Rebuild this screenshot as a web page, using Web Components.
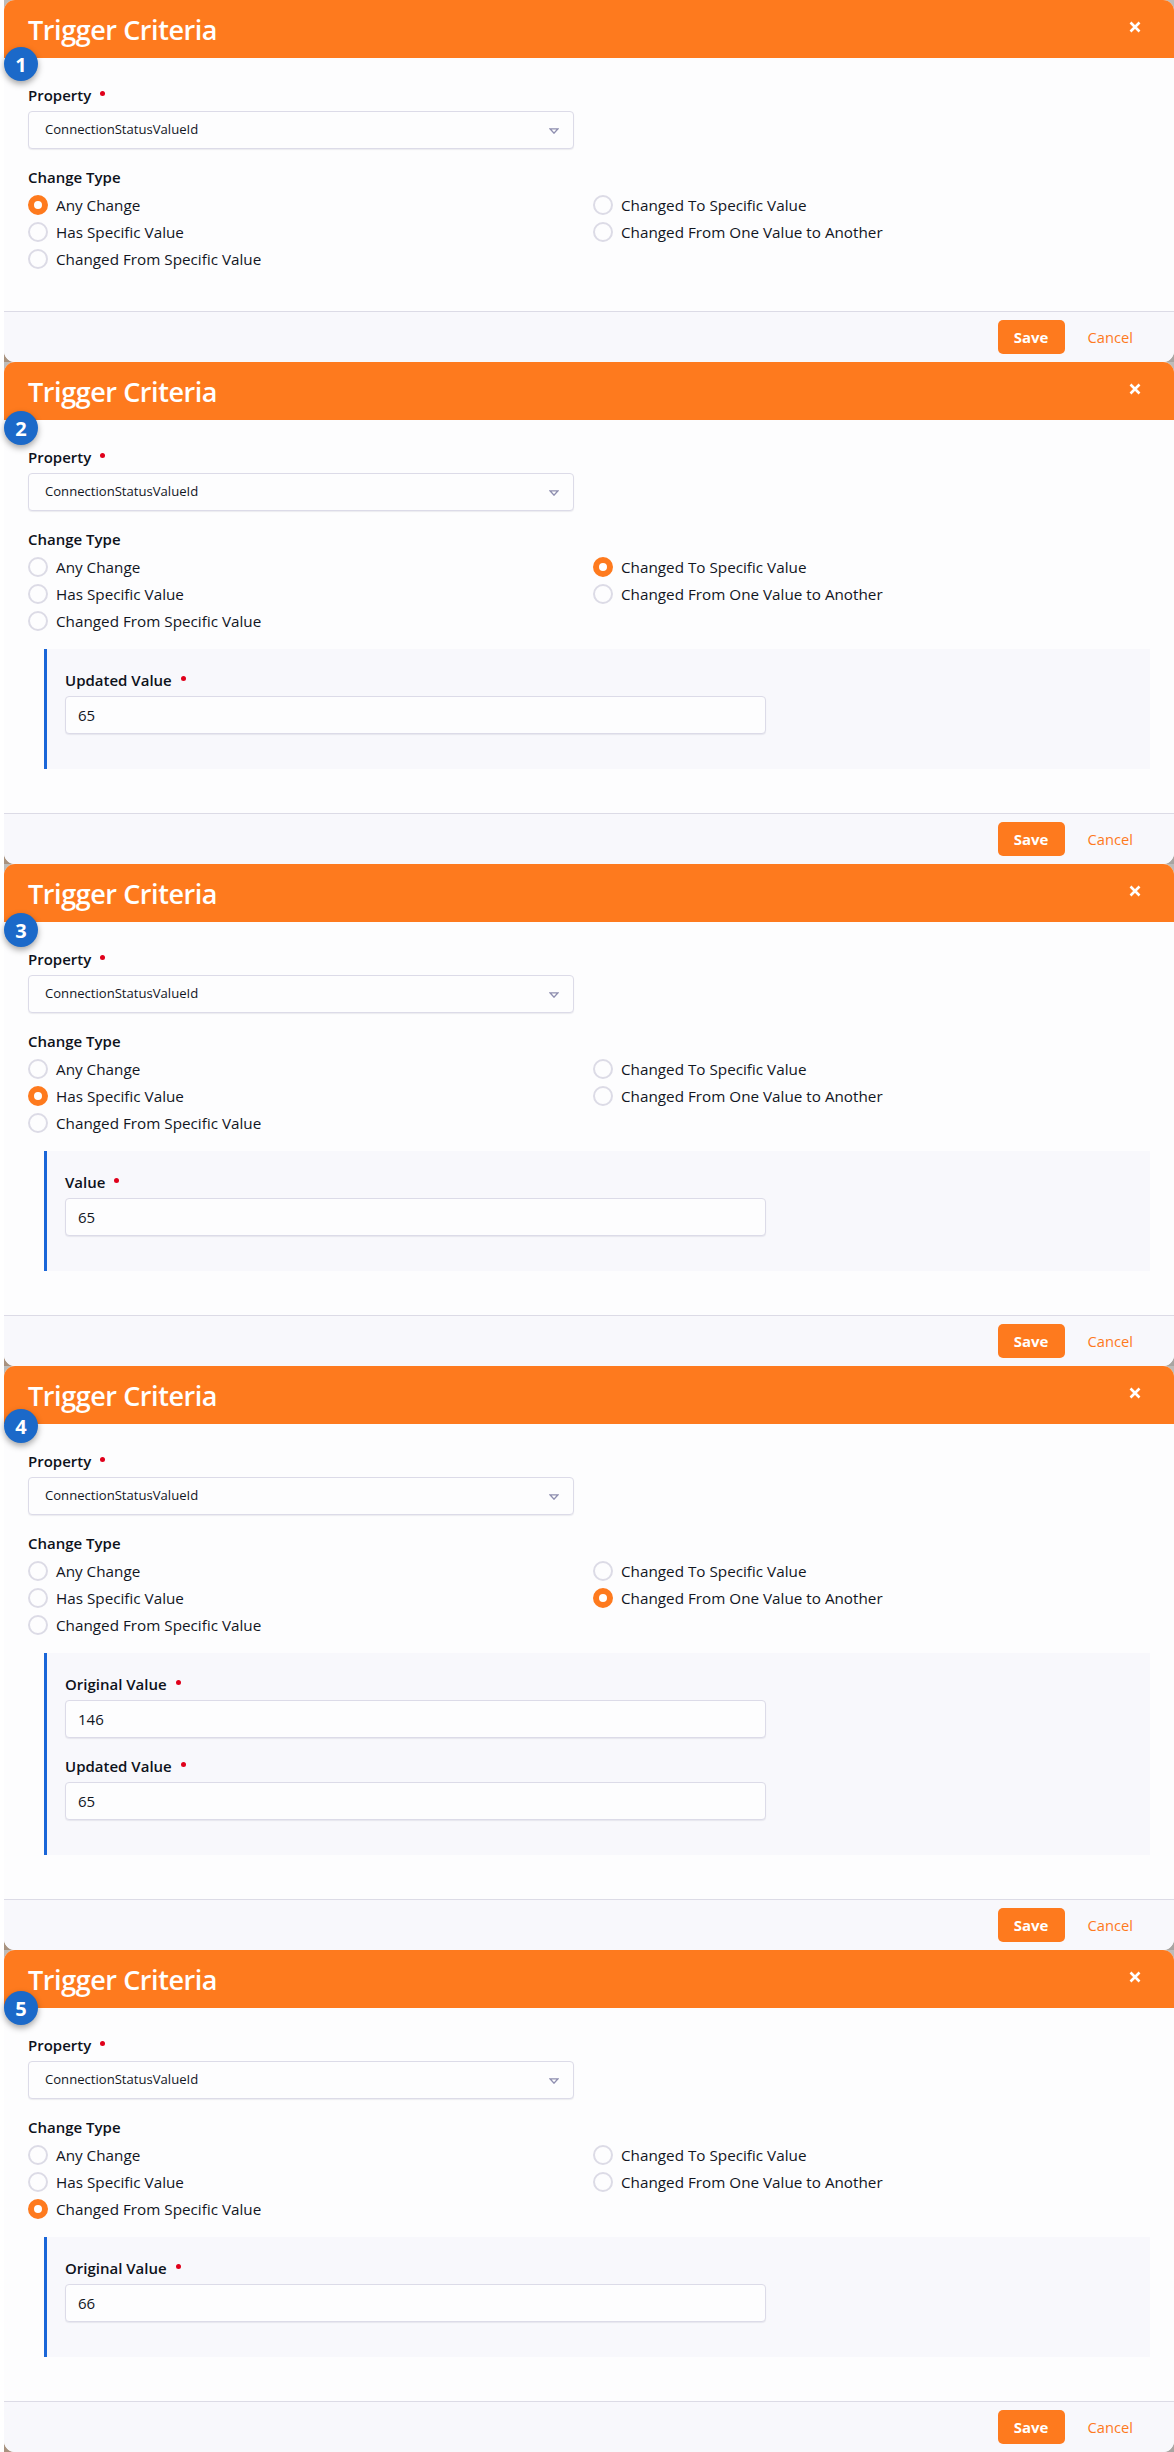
<!DOCTYPE html>
<html lang="en">
<head>
<meta charset="utf-8">
<title>Trigger Criteria</title>
<style>
  html, body { margin: 0; padding: 0; background: #fff; }
  body { font-family: "Open Sans", "Noto Sans", sans-serif; color: #12161f; }
</style>
</head>
<body>
<trigger-card number="1" badge-top="47" selected="Any Change"></trigger-card>
<trigger-card number="2" badge-top="49" selected="Changed To Specific Value">
  <value-field label="Updated Value" value="65"></value-field>
</trigger-card>
<trigger-card number="3" badge-top="49" selected="Has Specific Value">
  <value-field label="Value" value="65"></value-field>
</trigger-card>
<trigger-card number="4" badge-top="43" selected="Changed From One Value to Another">
  <value-field label="Original Value" value="146"></value-field>
  <value-field label="Updated Value" value="65"></value-field>
</trigger-card>
<trigger-card number="5" badge-top="41" selected="Changed From Specific Value">
  <value-field label="Original Value" value="66"></value-field>
</trigger-card>

<script>
const FIELD_LABEL_CSS = `
  .label { display: flex; box-sizing: border-box; height: 20px; padding-bottom: 2px; align-items: center; font-size: 15px; font-weight: 600; color: #0e121b; }
  .label i { width: 5px; height: 5px; margin: -4px 0 0 9px; border-radius: 50%; background: #e0001b; }
`;

class ValueField extends HTMLElement {
  connectedCallback() {
    this.attachShadow({ mode: "open" });
    this.shadowRoot.innerHTML = `
      <style>
        :host { display: block; margin-bottom: 19px; }
        :host(:last-child) { margin-bottom: 0; }
        ${FIELD_LABEL_CSS}
        .input {
          box-sizing: border-box; width: 701px; height: 38px; margin-top: 5px; padding: 0 12px;
          display: flex; align-items: center;
          background: #fdfdfe; border: 1px solid #dcdbe8; border-radius: 4px;
          box-shadow: 0 1px 1px rgba(40, 40, 80, .08);
          font-size: 15px;
        }
      </style>
      <div class="label">${this.getAttribute("label")}<i></i></div>
      <div class="input">${this.getAttribute("value")}</div>
    `;
  }
}

class RadioOption extends HTMLElement {
  connectedCallback() {
    this.attachShadow({ mode: "open" });
    const on = this.hasAttribute("checked");
    this.shadowRoot.innerHTML = `
      <style>
        :host { display: flex; align-items: center; gap: 8px; height: 27px; font-size: 15.25px; }
        .dot { box-sizing: border-box; width: 20px; height: 20px; border-radius: 50%; background: #fdfdfe; border: 2px solid #dcdbe6; }
        .dot.on { background: #fff; border: 6px solid #fe7a1e; }
      </style>
      <span class="dot ${on ? "on" : ""}"></span><span><slot></slot></span>
    `;
  }
}

class TriggerCard extends HTMLElement {
  connectedCallback() {
    this.attachShadow({ mode: "open" });
    const selected = this.getAttribute("selected");
    const radio = (name) =>
      `<radio-option ${name === selected ? "checked" : ""}>${name}</radio-option>`;
    const hasPanel = this.children.length > 0;

    this.shadowRoot.innerHTML = `
      <style>
        :host { display: block; position: relative; }
        /* the dark corners behind the rounded card */
        .shell {
          margin-left: 4px;
          background:
            linear-gradient(#bdbcba, #bdbcba) left top / 12px 12px no-repeat,
            linear-gradient(#bdbcba, #bdbcba) right top / 12px 12px no-repeat,
            linear-gradient(#a8927f, #a8927f) left bottom / 12px 12px no-repeat,
            linear-gradient(#a8a5a2, #a8a5a2) right bottom / 12px 12px no-repeat;
        }
        .card { background: #fdfdfe; border-radius: 11px; overflow: hidden; display: flex; flex-direction: column; }
        header {
          height: 58px; box-sizing: border-box; padding: 0 33px 0 24px; background: #fe7a1e; color: #fff;
          display: flex; align-items: center; justify-content: space-between;
        }
        header svg { margin-top: -4px; }
        h2 { margin: 0; font-size: 27px; font-weight: 600; letter-spacing: -0.43px; }
        .body { padding: 28px 24px 0; }
        ${FIELD_LABEL_CSS}
        .select {
          box-sizing: border-box; width: 546px; height: 38px; margin-top: 5px; padding: 0 14px 2px 16px;
          display: flex; align-items: center; justify-content: space-between;
          background: #fdfdfe; border: 1px solid #dcdbe8; border-radius: 4px;
          box-shadow: 0 1px 1px rgba(40, 40, 80, .08);
          font-size: 13.1px;
        }
        .select svg { margin-top: 4px; }
        .type { margin-top: 19px; }
        .options { display: grid; grid-template-columns: 565px 1fr; margin-top: 3px; grid-template-rows: repeat(3, 27px); grid-auto-flow: column; }
        .panel {
          margin: 15px 0 0 16px; width: 1106px; box-sizing: border-box; padding: 22px 0 35px 18px;
          background: #f8f8fc; border-left: 3px solid #1a66d8;
        }
        .panel[hidden] { display: none; }
        footer {
          height: 51px; box-sizing: border-box; margin-top: 44px; padding: 8px 41px 0 0; background: #f8f8fc; border-top: 1px solid #dcdbe6;
          display: flex; justify-content: flex-end; gap: 23px;
        }
        footer.bare { margin-top: 39px; }
        .save {
          box-sizing: border-box; width: 67px; height: 34px; border-radius: 5px; background: #fe7a1e; color: #fff;
          display: flex; align-items: center; justify-content: center; font-size: 15px; font-weight: 700;
        }
        .cancel { height: 34px; display: flex; align-items: center; font-size: 14.7px; color: #fe7a1e; }
        .badge {
          position: absolute; left: 4px; top: ${this.getAttribute("badge-top")}px;
          width: 34px; height: 34px; border-radius: 50%; background: #1b69c9; color: #fff;
          display: flex; align-items: center; justify-content: center; font-size: 20px; font-weight: 700;
          box-shadow: 0 3px 6px rgba(0, 0, 0, .35);
        }
      </style>
      <div class="shell">
        <div class="card">
          <header>
            <h2>Trigger Criteria</h2>
            <svg width="12" height="12" viewBox="0 0 12 12"><path d="M1.5 1.5l9 9M10.5 1.5l-9 9" stroke="#fff" stroke-width="2.6" fill="none"/></svg>
          </header>
          <div class="body">
            <div class="label">Property<i></i></div>
            <div class="select">
              <span>ConnectionStatusValueId</span>
              <svg width="10" height="6" viewBox="0 0 10 6"><path d="M1 .8h8L5 5.2z" fill="#fff" stroke="#8f8fb0" stroke-width="1.3"/></svg>
            </div>
            <div class="label type">Change Type</div>
            <div class="options">
              ${radio("Any Change")}${radio("Has Specific Value")}${radio("Changed From Specific Value")}
              ${radio("Changed To Specific Value")}${radio("Changed From One Value to Another")}
            </div>
            <div class="panel" ${hasPanel ? "" : "hidden"}><slot></slot></div>
          </div>
          <footer class="${hasPanel ? "" : "bare"}">
            <div class="save">Save</div>
            <div class="cancel">Cancel</div>
          </footer>
        </div>
      </div>
      <div class="badge">${this.getAttribute("number")}</div>
    `;
  }
}

customElements.define("value-field", ValueField);
customElements.define("radio-option", RadioOption);
customElements.define("trigger-card", TriggerCard);
</script>
</body>
</html>
